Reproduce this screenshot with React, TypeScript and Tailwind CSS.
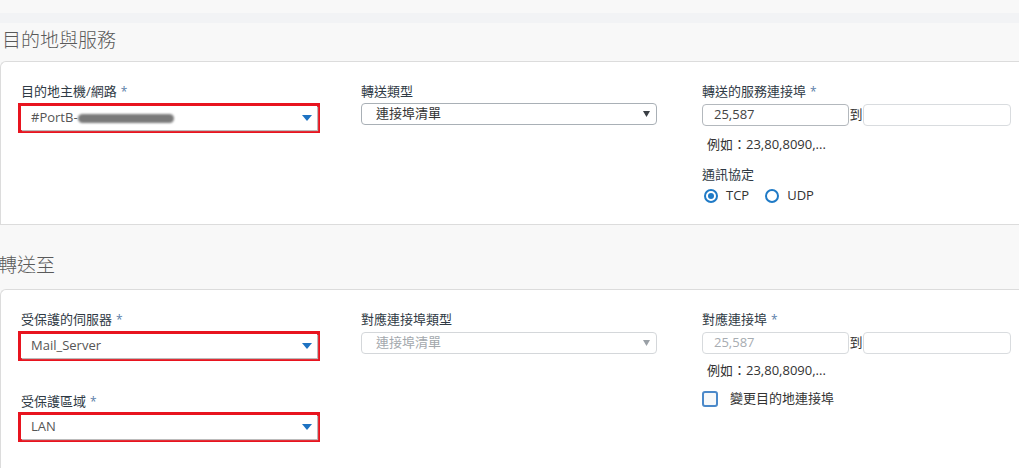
const FONT = '[font-family:"Open_Sans","Noto_Sans_CJK_TC",sans-serif]'

function Caret({ blue }: { blue?: boolean }) {
  return blue ? (
    <svg width="10" height="6" viewBox="0 0 10 6" className="shrink-0">
      <path d="M0 0 H10 L5 6 Z" fill="#1d72c2" />
    </svg>
  ) : (
    <svg width="7" height="6" viewBox="0 0 7 6" className="shrink-0">
      <path d="M0 0 H7 L3.5 6 Z" fill="#3a3f45" />
    </svg>
  )
}

function Label({ text, req }: { text: string; req?: boolean }) {
  return (
    <div className="text-[13px] leading-4 text-[#2f3a45] h-4">
      {text}
      {req && <span className="ml-1 text-[#5b7ea8] text-[12px]">*</span>}
    </div>
  )
}

function RedSelect({ children }: { children: React.ReactNode }) {
  return (
    <div className="w-[302px] h-[30px] border-[3px] border-[#e8141f] bg-white">
      <div className="h-full flex items-center justify-between pl-[10px] pr-[5px] shadow-[1px_1px_1px_#bbb] text-[13px] text-[#555]">
        <div className="flex items-center">{children}</div>
        <Caret blue />
      </div>
    </div>
  )
}

function PlainSelect({ text, disabled }: { text: string; disabled?: boolean }) {
  return (
    <div
      className={
        'w-[296px] h-[22px] rounded-[4px] border flex items-center justify-between pl-[14px] pr-[6px] text-[13px] ' +
        (disabled ? 'border-[#d4d7da] text-[#a3a8ad]' : 'border-[#a9b0b6] text-[#333]')
      }
    >
      <span>{text}</span>
      {disabled ? (
        <svg width="7" height="6" viewBox="0 0 7 6">
          <path d="M0 0 H7 L3.5 6 Z" fill="#9aa0a6" />
        </svg>
      ) : (
        <Caret />
      )}
    </div>
  )
}

function PortRange({ value, disabled }: { value: string; disabled?: boolean }) {
  return (
    <div className="flex items-center h-[22px]">
      <div
        className={
          'w-[147px] h-full rounded-[4px] border flex items-center pl-[11px] text-[13px] ' +
          (disabled ? 'border-[#d7dadd] text-[#a7acb1]' : 'border-[#b3b8bd] text-[#444]')
        }
      >
        {value}
      </div>
      <span className="text-[13px] text-[#333] w-[14px] text-center">到</span>
      <div className="w-[148px] h-full rounded-[4px] border border-[#d9dcdf] bg-white" />
    </div>
  )
}

function Example() {
  return <div className="text-[13px] leading-4 text-[#333] pl-[5px]">例如：23,80,8090,...</div>
}

export default function App() {
  return (
    <div className={'w-[1019px] h-[468px] overflow-hidden bg-[#f8f8f8] ' + FONT}>
      <div className="h-[13px] bg-[#f8f8f8]" />
      <div className="h-[10px] bg-[#f2f3f5]" />

      <h2 className="h-[38px] flex items-center pb-[4px] pl-[2px] text-[19px] text-[#5a5a5a] font-light">目的地與服務</h2>

      <div className="h-[164px] bg-white border-t border-l border-b border-[#dcdcdc] rounded-tl-[6px] flex pt-[21px] pl-[17px]">
        <div className="w-[302px] flex flex-col gap-[4px]">
          <div className="pl-[3px]">
            <Label text="目的地主機/網路" req />
          </div>
          <RedSelect>
            <span>#PortB-</span>
            <span className="inline-block w-[96px] h-[9px] rounded-full bg-[#7a7a7a] blur-[1px]" />
          </RedSelect>
        </div>

        <div className="w-[296px] ml-[41px] flex flex-col gap-[4px]">
          <Label text="轉送類型" />
          <PlainSelect text="連接埠清單" />
        </div>

        <div className="ml-[45px] flex flex-col">
          <Label text="轉送的服務連接埠" req />
          <div className="mt-[5px]">
            <PortRange value="25,587" />
          </div>
          <div className="mt-[10px]">
            <Example />
          </div>
          <div className="mt-[14px]">
            <Label text="通訊協定" />
          </div>
          <div className="mt-[4px] flex items-center text-[13px] text-[#333]">
            <span className="ml-[2px] w-[14px] h-[14px] rounded-full border-2 border-[#1f7ac6] flex items-center justify-center">
              <span className="w-[6px] h-[6px] rounded-full bg-[#1f7ac6]" />
            </span>
            <span className="ml-[8px]">TCP</span>
            <span className="ml-[16px] w-[14px] h-[14px] rounded-full border-2 border-[#1f7ac6]" />
            <span className="ml-[8px]">UDP</span>
          </div>
        </div>
      </div>

      <h2 className="h-[64px] flex items-center pt-[16px] -ml-[2px] text-[19px] text-[#5a5a5a] font-light">轉送至</h2>

      <div className="h-[200px] bg-white border-t border-l border-[#dcdcdc] rounded-tl-[6px] flex pt-[21px] pl-[17px]">
        <div className="w-[302px] flex flex-col">
          <div className="pl-[3px]">
            <Label text="受保護的伺服器" req />
          </div>
          <div className="mt-[4px]">
            <RedSelect>
              <span>Mail_Server</span>
            </RedSelect>
          </div>
          <div className="pl-[3px] mt-[32px]">
            <Label text="受保護區域" req />
          </div>
          <div className="mt-[3px]">
            <RedSelect>
              <span>LAN</span>
            </RedSelect>
          </div>
        </div>

        <div className="w-[296px] ml-[41px] flex flex-col gap-[5px]">
          <Label text="對應連接埠類型" />
          <PlainSelect text="連接埠清單" disabled />
        </div>

        <div className="ml-[45px] flex flex-col">
          <Label text="對應連接埠" req />
          <div className="mt-[5px]">
            <PortRange value="25,587" disabled />
          </div>
          <div className="mt-[8px]">
            <Example />
          </div>
          <div className="mt-[11px] flex items-center text-[13px] text-[#333]">
            <span className="w-[16px] h-[16px] rounded-[3px] border-2 border-[#4a88c9] bg-[#f6f8fa]" />
            <span className="ml-[12px]">變更目的地連接埠</span>
          </div>
        </div>
      </div>
    </div>
  )
}
